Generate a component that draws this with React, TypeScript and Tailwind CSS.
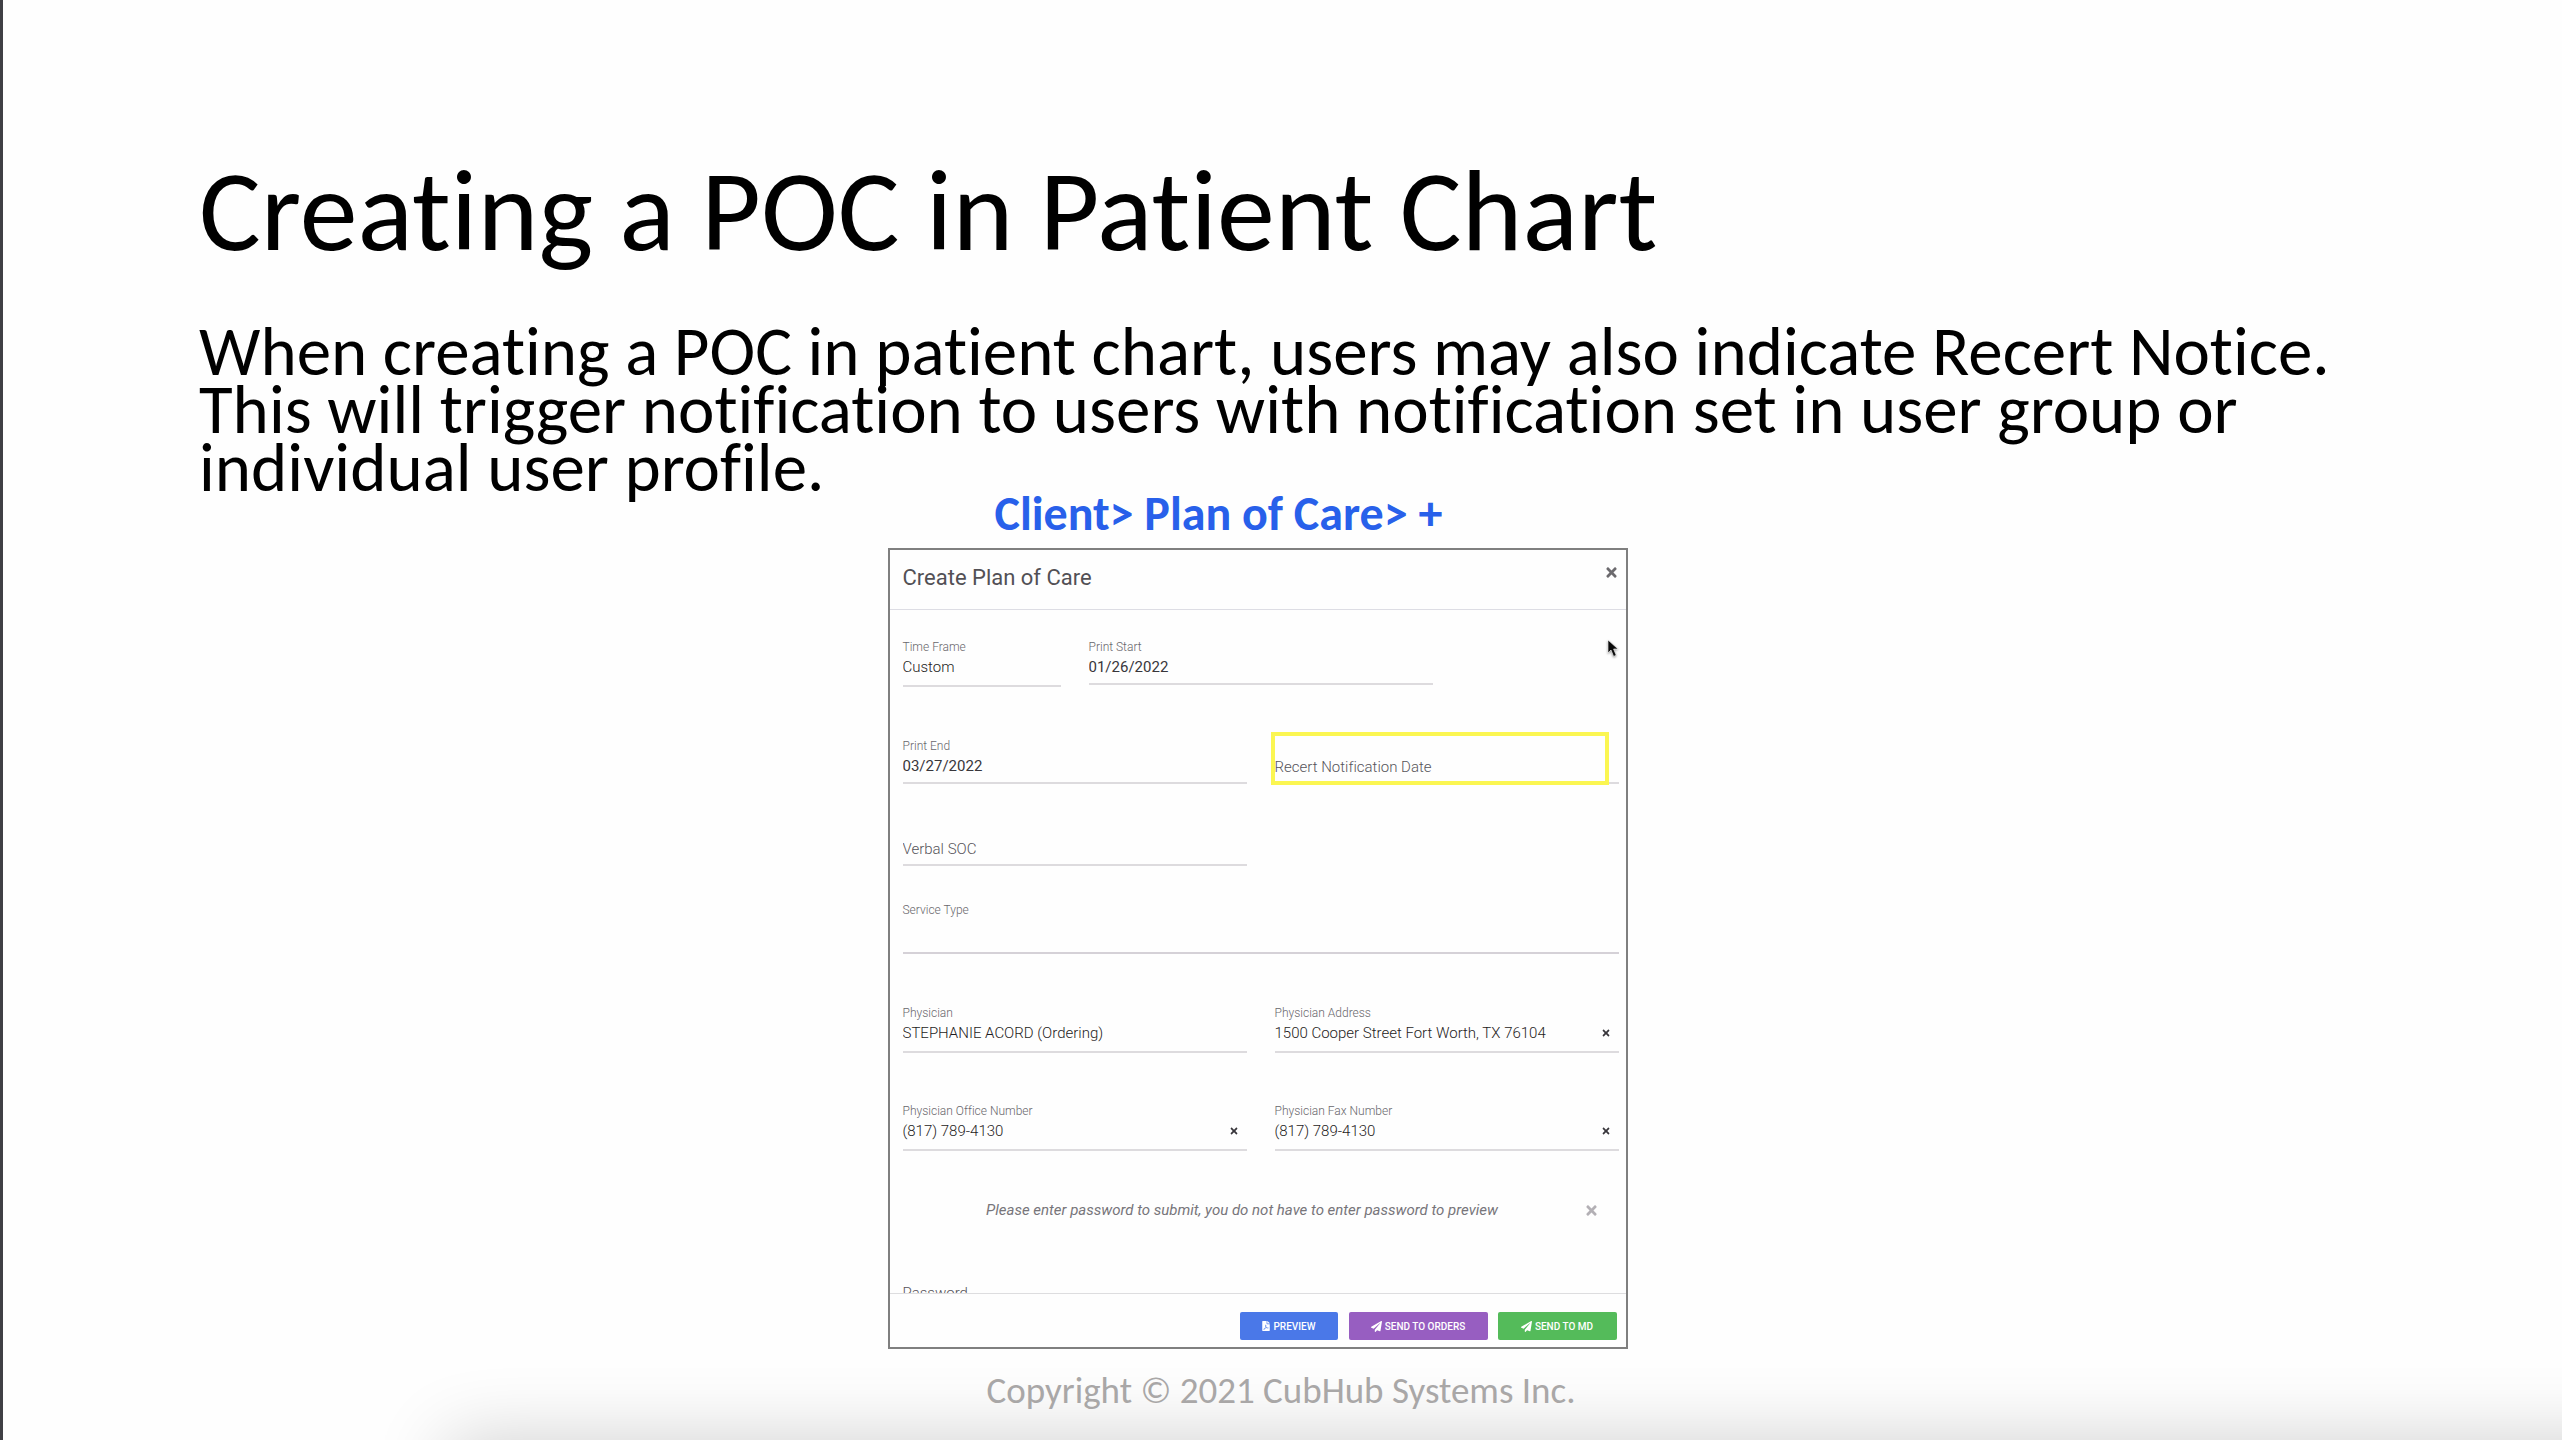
import { useState } from 'react';
import { clsx } from 'clsx';
import { FaFilePdf, FaPaperPlane, FaTimes } from 'react-icons/fa';

interface FieldProps {
    id: string;
    label: string;
    value?: string;
    tall?: boolean;
    strong?: boolean;
    clearable?: boolean;
    className?: string;
}

// Label above an underlined text box
function Field({ id, label, value = '', tall, strong, clearable, className }: FieldProps) {
    const [text, setText] = useState(value);

    return (
        <div className={className}>
            <label htmlFor={id} className="block text-[12px] leading-[15px] text-[#69676c]">
                {label}
            </label>
            <div className={clsx('flex items-center border-b-2 border-[#dddbde]', tall ? 'pb-[6px]' : 'pb-1')}>
                <input
                    id={id}
                    value={text}
                    onChange={(e) => setText(e.target.value)}
                    className={clsx('h-6 min-w-0 flex-1 text-[15px] outline-none', strong ? 'font-normal text-[#38363b]' : 'text-[#1e1c22]')}
                />
                {clearable && (
                    <button type="button" aria-label={`Clear ${label}`} onClick={() => setText('')} className="mr-2 text-[#38363b]">
                        <FaTimes className="size-[10px]" />
                    </button>
                )}
            </div>
        </div>
    );
}

// Empty text box whose label sits in the value position
function EmptyField({ id, label, highlight }: { id: string; label: string; highlight?: boolean }) {
    return (
        <div className="relative self-end border-b-2 border-[#dddbde] pb-1">
            <input
                id={id}
                aria-label={label}
                placeholder={label}
                className="block h-[22px] w-full text-[15px] outline-none placeholder:text-[#56545a]"
            />
            {highlight && (
                <div className="pointer-events-none absolute -left-1 right-[10px] -bottom-[3px] h-[53px] border-4 border-[#fbf651]" />
            )}
        </div>
    );
}

function PlanOfCareDialog() {
    const [noteOpen, setNoteOpen] = useState(true);

    return (
        <section className="relative mt-[18px] border-2 border-[#7f7f7f] bg-[#fefefe] font-[Roboto,sans-serif] font-light">
            <header className="flex h-[60px] justify-between border-b border-[#dddde4] pl-[13px] pr-[7px]">
                <h3 className="pt-[14px] text-[22px] leading-[28px] font-normal text-[#525055]">Create Plan of Care</h3>
                <button type="button" aria-label="Close" className="mt-[14px] h-4 text-[#6c6a6e]">
                    <FaTimes className="size-[15px]" />
                </button>
            </header>

            <form className="h-[683px] overflow-hidden pt-[30px] pl-[13px] pr-[7px]" onSubmit={(e) => e.preventDefault()}>
                <div className="flex items-start gap-7">
                    <div className="w-[158px]">
                        <label htmlFor="time-frame" className="block text-[12px] leading-[15px] text-[#69676c]">
                            Time Frame
                        </label>
                        <div className="border-b-2 border-[#dddbde] pb-[6px]">
                            <select id="time-frame" className="block h-6 w-full appearance-none text-[15px] font-light text-[#1e1c22] outline-none">
                                <option>Custom</option>
                            </select>
                        </div>
                    </div>
                    <Field id="print-start" label="Print Start" value="01/26/2022" strong className="w-[344px]" />
                </div>

                <div className="mt-[52px] grid grid-cols-2 gap-7">
                    <Field id="print-end" label="Print End" value="03/27/2022" strong />
                    <EmptyField id="recert-date" label="Recert Notification Date" highlight />
                </div>

                <div className="mt-[54px] grid grid-cols-2 gap-7">
                    <EmptyField id="verbal-soc" label="Verbal SOC" />
                </div>

                <div className="mt-[37px]">
                    <label htmlFor="service-type" className="block text-[12px] leading-[15px] text-[#69676c]">
                        Service Type
                    </label>
                    <input id="service-type" className="block h-9 w-full border-b-2 border-[#d5d1d7] outline-none" />
                </div>

                <div className="mt-[52px] grid grid-cols-2 gap-x-7 gap-y-[51px]">
                    <Field id="physician" label="Physician" value="STEPHANIE ACORD (Ordering)" tall />
                    <Field id="address" label="Physician Address" value="1500 Cooper Street Fort Worth, TX 76104" tall clearable />
                    <Field id="office" label="Physician Office Number" value="(817) 789-4130" tall clearable />
                    <Field id="fax" label="Physician Fax Number" value="(817) 789-4130" tall clearable />
                </div>

                <div className="mt-[34px] flex h-[50px] items-center">
                    {noteOpen && (
                        <>
                            <p className="flex-1 pr-[2px] text-center text-[15px] font-normal italic text-[#77757a]">
                                Please enter password to submit, you do not have to enter password to preview
                            </p>
                            <button type="button" aria-label="Dismiss" onClick={() => setNoteOpen(false)} className="mr-5 text-[#b3b0b5]">
                                <FaTimes className="size-[15px]" />
                            </button>
                        </>
                    )}
                </div>

                <label htmlFor="password" className="mt-[47px] block text-[15px] leading-[22px] text-[#56545a]">
                    Password
                </label>
                <input id="password" type="password" className="block w-full" />
            </form>

            <footer className="flex h-[54px] items-start justify-end border-t border-[#dddddf] pt-[18px] pr-[9px] text-[10px] font-medium text-white">
                <button type="button" className="flex h-7 w-[98px] items-center justify-center gap-[2px] rounded-xs bg-[#4a78e8]">
                    <FaFilePdf className="size-[10px]" />
                    PREVIEW
                </button>
                <button type="button" className="ml-[11px] flex h-7 w-[139px] items-center justify-center gap-[3px] rounded-xs bg-[#975ec1]">
                    <FaPaperPlane className="size-[11px]" />
                    SEND TO ORDERS
                </button>
                <button type="button" className="ml-[10px] flex h-7 w-[119px] items-center justify-center gap-[3px] rounded-xs bg-[#54bb5a]">
                    <FaPaperPlane className="size-[11px]" />
                    SEND TO MD
                </button>
            </footer>

            {/* Mouse pointer */}
            <svg viewBox="0 0 12 19" className="absolute right-[7px] top-[89px] h-[19px] w-3 drop-shadow-[0_1px_1px_rgba(0,0,0,0.4)]">
                <path d="M1 1v13l3-3 2.6 6.4 2.6-1.1L6.600 10H11z" fill="#0a0a0a" stroke="#fff" strokeWidth="0.6" />
            </svg>
        </section>
    );
}

export default function App() {
    return (
        <main className="relative min-h-screen overflow-hidden border-l-[3px] border-[#3f3f44] bg-[#fefefe] pt-[155px] font-[Carlito,Lato,sans-serif] text-black [font-variant-ligatures:none]">
            {/* Soft shadow rising from the bottom edge */}
            <div className="absolute top-full left-[445px] -right-24 h-24 shadow-[0_0_75px_rgba(0,0,0,0.19)]" />

            <div className="relative pl-[196px]">
                <h1 className="text-[116px] leading-[112px] whitespace-nowrap">Creating a POC in Patient Chart</h1>
                <p className="mt-[56px] text-[69px] leading-[58px] whitespace-nowrap">
                    When creating a POC in patient chart, users may also indicate Recert Notice.
                    <br />
                    This will trigger notification to users with notification set in user group or
                    <br />
                    individual user profile.
                </p>
            </div>

            <div className="relative pr-[50px]">
                <div className="mx-auto max-w-[740px]">
                    <h2 className="pl-[107px] text-[48px] leading-[33px] font-bold whitespace-nowrap text-[#2860ea]">
                        Client&gt; Plan of Care&gt; +
                    </h2>
                    <PlanOfCareDialog />
                </div>
            </div>

            <p className="relative mt-[21px] pr-[3px] text-center text-[37px] leading-[42px] text-[#a9a7a7]">
                Copyright © 2021 CubHub Systems Inc.
            </p>
        </main>
    );
}
